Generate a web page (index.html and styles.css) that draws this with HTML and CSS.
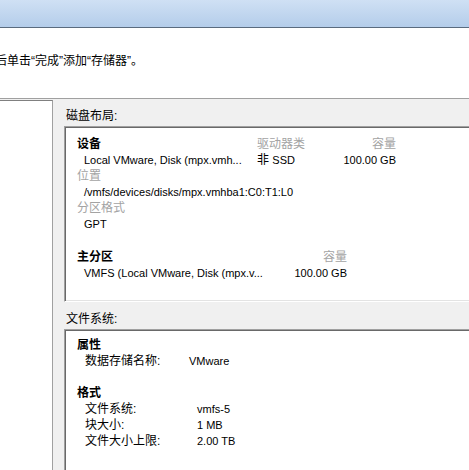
FILE: index.html
```html
<!DOCTYPE html>
<html lang="zh-CN">
<head>
<meta charset="utf-8">
<link rel="stylesheet" href="styles.css">
</head>
<body>
<div class="titlebar"></div>
<div class="intro">后单击“完成”添加“存储器”。</div>
<div class="main">
  <div class="sidebar"></div>
  <div class="content">
    <div class="label">磁盘布局:</div>
    <div class="box box-disk">
      <div class="row">
        <div class="c1 strong">设备</div>
        <div class="c2 muted">驱动器类</div>
        <div class="c3 muted">容量</div>
      </div>
      <div class="row">
        <div class="c1 val en">Local VMware, Disk (mpx.vmh...</div>
        <div class="c2">非 <span class="en">SSD</span></div>
        <div class="c3 en">100.00 GB</div>
      </div>
      <div class="row"><div class="muted">位置</div></div>
      <div class="row"><div class="val en">/vmfs/devices/disks/mpx.vmhba1:C0:T1:L0</div></div>
      <div class="row"><div class="muted">分区格式</div></div>
      <div class="row"><div class="val en">GPT</div></div>
      <div class="row gap"></div>
      <div class="row">
        <div class="p1 strong">主分区</div>
        <div class="p3 muted">容量</div>
      </div>
      <div class="row">
        <div class="p1 val en">VMFS (Local VMware, Disk (mpx.v...</div>
        <div class="p3 en">100.00 GB</div>
      </div>
    </div>
    <div class="label label-fs">文件系统:</div>
    <div class="box box-fs">
      <div class="row"><div class="strong">属性</div></div>
      <div class="row">
        <div class="k1">数据存储名称:</div>
        <div class="en">VMware</div>
      </div>
      <div class="row gap-fs"></div>
      <div class="row"><div class="strong">格式</div></div>
      <div class="row">
        <div class="k2">文件系统:</div>
        <div class="en">vmfs-5</div>
      </div>
      <div class="row">
        <div class="k2">块大小:</div>
        <div class="en">1 MB</div>
      </div>
      <div class="row">
        <div class="k2">文件大小上限:</div>
        <div class="en">2.00 TB</div>
      </div>
    </div>
  </div>
</div>
</body>
</html>
```
FILE: styles.css
```css
*, *::before, *::after {
  box-sizing: border-box;
}
html, body {
  margin: 0;
  padding: 0;
}
body {
  width: 469px;
  height: 470px;
  overflow: hidden;
  background: #ffffff;
  font-family: "Liberation Sans", "Noto Sans CJK SC", sans-serif;
  font-size: 12px;
  color: #000;
}
.titlebar {
  height: 28px;
  background: linear-gradient(#cfe0f4, #b4cdea);
  border-bottom: 1px solid #5a6b7e;
}
.intro {
  height: 71px;
  padding-top: 25px;
  line-height: 16px;
  white-space: nowrap;
  text-indent: -5px;
  border-bottom: 1px solid #a0a0a0;
}
.main {
  display: flex;
  height: 371px;
  overflow: hidden;
  background: #f0f0f0;
  padding-top: 1px;
}
.sidebar {
  width: 53px;
  flex: none;
  background: #fff;
  border-top: 1px solid #808080;
  border-right: 1px solid #a0a0a0;
}
.content {
  flex: 1;
  padding: 8px 0 0 11px;
  min-width: 0;
}
.label {
  line-height: 16px;
  padding-left: 2px;
  margin-bottom: 2px;
}
.label-fs {
  margin-top: 9px;
}
.box {
  background: #fff;
  margin-right: -20px;
  border: 1px solid;
  border-color: #a0a0a0 #ffffff #ffffff #a0a0a0;
  box-shadow: inset 1px 1px 0 #696969, inset -1px -1px 0 #e3e3e3;
  padding: 9px 0 0 12px;
}
.box-disk {
  height: 176px;
}
.box-fs {
  height: 144px;
  padding-top: 7px;
  border-bottom: 0;
  box-shadow: inset 1px 1px 0 #696969;
}
.row {
  display: flex;
  height: 16px;
  line-height: 16px;
  white-space: nowrap;
}
.row.gap {
  height: 17px;
}
.row.gap-fs {
  height: 16px;
}
.strong {
  font-weight: bold;
}
.muted {
  color: #a3a3a3;
}
.en {
  font-size: 11px;
}
.val {
  padding-left: 7px;
}
.c1 { width: 180px; }
.c2 { width: 60px; }
.c3 { width: 79px; text-align: right; }
.p1 { width: 200px; }
.p3 { width: 70px; text-align: right; }
.k1 { width: 112px; padding-left: 8px; }
.k2 { width: 120px; padding-left: 8px; }
```
